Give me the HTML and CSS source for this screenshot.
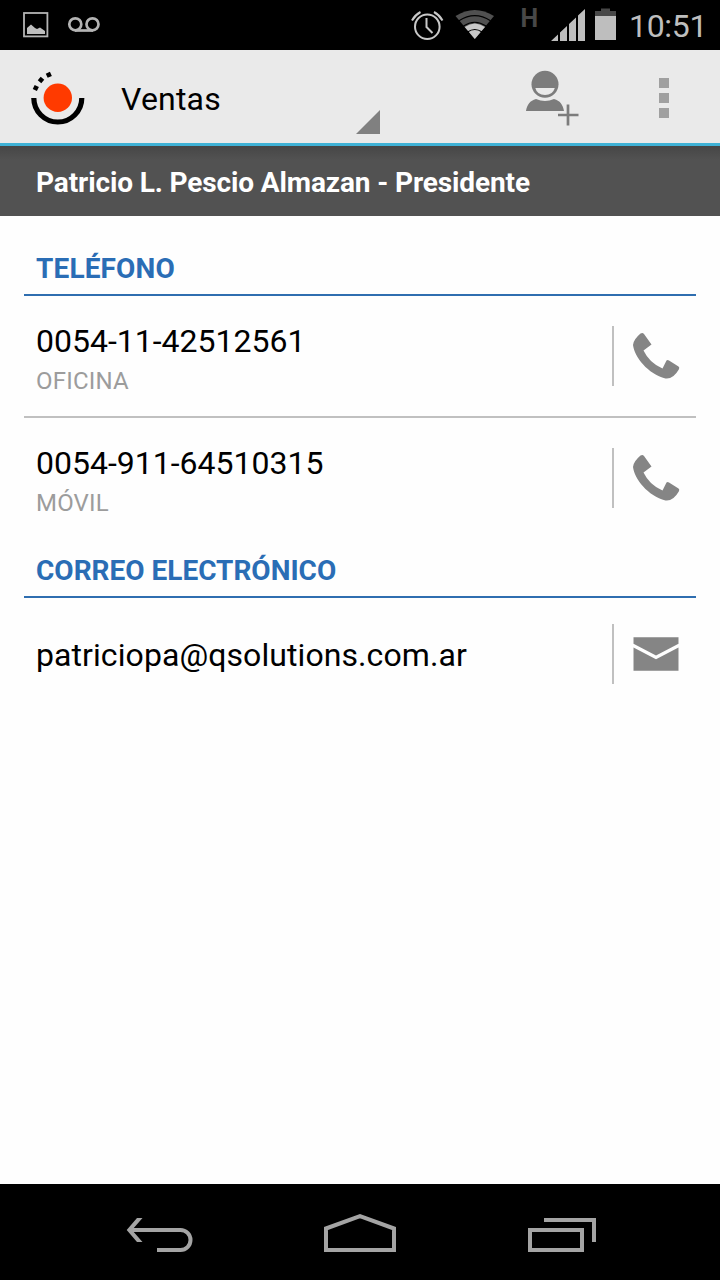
FILE: index.html
```html
<!DOCTYPE html>
<html lang="es">
<head>
  <meta charset="UTF-8">
  <meta name="viewport" content="width=device-width, initial-scale=1.0">
  <title>Ventas</title>
  <link rel="stylesheet" href="styles.css">
</head>
<body>

<!-- Status bar -->
<div class="status-bar">
  <svg class="status-left" width="110" height="50" viewBox="0 0 110 50">
    <rect x="24" y="13" width="23.4" height="23.4" fill="none" stroke="#b4b4b4" stroke-width="1.8"/>
    <path d="M27 34V28l4-3.5 4 3.5 2 1 3-1.5 5 3.500V34z" fill="#bebebe"/>
    <g fill="none" stroke="#b4b4b4" stroke-width="2.700">
      <circle cx="75.300" cy="24.300" r="6"/>
      <circle cx="92.500" cy="24.300" r="6"/>
      <path d="M75 30.500h18"/>
    </g>
  </svg>
  <svg class="status-right" width="220" height="50" viewBox="400 0 220 50">
    <!-- alarm -->
    <g fill="none" stroke="#c8c8c8" stroke-width="2">
      <circle cx="427.300" cy="26.700" r="12.300"/>
      <path d="M426.500 18v9l6 6"/>
      <path d="M412 20.500q3-5.500 8.500-8.500M434 12q5.500 3 8.500 8.500"/>
    </g>
    <!-- wifi -->
    <path d="M474.800 39L455.500 16Q474.800 4 494 16z" fill="#505050"/>
    <path d="M474.800 39L464.700 27Q474.800 20 485 27z" fill="#c8c8c8"/>
    <g fill="none" stroke="#000" stroke-width="1.200">
      <path d="M459 20.800Q474.800 10.500 490.500 20.800"/>
      <path d="M463.500 26Q474.800 18.500 486 26"/>
      <path d="M467.500 32Q474.800 27 482 32"/>
    </g>
    <text class="network" x="520.500" y="27">H</text>
    <!-- signal -->
    <path d="M551 41l7-6.500V41zM560 41v-8.500l7-6.500v15zM569 41V24l7-6.500V41zM578 41V15.500l7-6.500v32z" fill="#bebebe"/>
    <!-- battery -->
    <path d="M595 16.500V11h6V8.500h9V11h6v5.500z" fill="#484848"/>
    <rect x="595" y="16" width="21" height="24" fill="#bebebe"/>
  </svg>
  <span class="clock">10:51</span>
</div>

<!-- Action bar -->
<header class="action-bar">
  <svg class="logo" width="56" height="56" viewBox="30 70 56 56">
    <path d="M33.800 98a24 24 0 0 0 48 0" fill="none" stroke="#000" stroke-width="5.200"/>
    <circle cx="57.800" cy="97.700" r="14.200" fill="#ff3a00"/>
    <g fill="#000">
      <rect x="-2.300" y="-2.300" width="4.600" height="4.600" transform="translate(35.800 88) rotate(25)"/>
      <rect x="-2.300" y="-2.300" width="4.600" height="4.600" transform="translate(41 80) rotate(40)"/>
      <rect x="-2.300" y="-2.300" width="4.600" height="4.600" transform="translate(48.800 74.800) rotate(65)"/>
    </g>
  </svg>
  <div class="spinner">
    <span class="spinner-text">Ventas</span>
    <svg class="spinner-arrow" width="24" height="24" viewBox="0 0 24 24"><path d="M24 0v24H0z" fill="#808080"/></svg>
  </div>
  <svg class="add-contact" width="54" height="58" viewBox="525 69 54 58">
    <circle cx="545" cy="84.300" r="13.500" fill="#7c7c7c"/>
    <path d="M535.300 88h19.500q-2 7-9.800 7t-9.700-7z" fill="#eaeaea"/>
    <path d="M526 111c1-6 4-10.500 10-12q9 4 18 0c6 1.500 9 6 10 12z" fill="#7c7c7c"/>
    <path d="M558 115h20.500M568 104.500v21" stroke="#7c7c7c" stroke-width="2.700" fill="none"/>
  </svg>
  <svg class="overflow" width="10" height="40" viewBox="0 0 10 40">
    <path d="M0 0h10v10H0zM0 15h10v10H0zM0 30h10v10H0z" fill="#a0a0a0"/>
  </svg>
</header>

<h1 class="contact-name">Patricio L. Pescio Almazan - Presidente</h1>

<main class="content">
  <h2 class="section-title phone">TELÉFONO</h2>
  <div class="row divider">
    <div class="row-text">
      <div class="value">0054-11-42512561</div>
      <div class="label">OFICINA</div>
    </div>
    <div class="row-action">
      <svg width="48" height="48" viewBox="0 0 48 48"><path class="icon" d="M8.500 1.600Q10.500 0 12 2L19.500 12.500 11.500 18.500Q17.500 31 30.500 36.500L34.500 28.500Q35.500 27.500 37 28.500L46.500 34.500Q48 35.500 46.800 37.500Q41 47.500 33.500 46.500C16 42 2.500 25 1 13Q1.500 7.500 8.500 1.600z"/></svg>
    </div>
  </div>
  <div class="row">
    <div class="row-text">
      <div class="value">0054-911-64510315</div>
      <div class="label">MÓVIL</div>
    </div>
    <div class="row-action">
      <svg width="48" height="48" viewBox="0 0 48 48"><path class="icon" d="M8.500 1.600Q10.500 0 12 2L19.500 12.500 11.500 18.500Q17.500 31 30.500 36.500L34.500 28.500Q35.500 27.500 37 28.500L46.500 34.500Q48 35.500 46.800 37.500Q41 47.500 33.500 46.500C16 42 2.500 25 1 13Q1.500 7.500 8.500 1.600z"/></svg>
    </div>
  </div>
  <h2 class="section-title mail">CORREO ELECTRÓNICO</h2>
  <div class="row row-single">
    <div class="row-text">
      <div class="value email">patriciopa@qsolutions.com.ar</div>
    </div>
    <div class="row-action">
      <svg width="48" height="48" viewBox="0 0 48 48"><path class="icon" d="M1.500 7.300h45v6.500L24 25.500 1.500 13.800zM1.500 17.500L24 29.300l22.500-11.800v23.200h-45z"/></svg>
    </div>
  </div>
</main>

<!-- Navigation bar -->
<nav class="nav-bar">
  <svg width="68" height="40" viewBox="126 1214 68 40">
    <path d="M131 1230h49.500a10 10 0 0 1 0 20h-23.500"/>
    <path class="arrow-head" d="M137 1218h5.500l-10.500 12 10.500 12H137l-10.300-12z"/>
  </svg>
  <svg width="76" height="40" viewBox="322 1214 76 40">
    <path d="M326 1228.500l34-12.300 34 12.300V1250h-68z"/>
  </svg>
  <svg width="72" height="40" viewBox="526 1214 72 40">
    <path d="M530 1230h52v20h-52zM544 1220h50v22"/>
  </svg>
</nav>

</body>
</html>
```

FILE: styles.css
```css
* {
  box-sizing: border-box;
}
body {
  display: flex;
  flex-direction: column;
  width: 720px;
  height: 1280px;
  margin: 0;
  overflow: hidden;
  font-family: Roboto, sans-serif;
  background: #fefefe;
  color: #000;
}
svg {
  display: block;
  flex: none;
}
.status-bar {
  display: flex;
  height: 50px;
  background: #000;
}
.status-right {
  margin-left: auto;
}
.network {
  fill: #484848;
  font-size: 25px;
  font-weight: bold;
}
.clock {
  width: 100px;
  padding: 7px 0 0 9px;
  font-size: 32px;
  line-height: 38px;
  letter-spacing: -0.3px;
  color: #bebebe;
}
.action-bar {
  display: flex;
  align-items: flex-start;
  height: 96px;
  background: #eaeaea;
  border-bottom: 3px solid #3fb2d6;
}
.logo {
  margin: 20px 0 0 30px;
}
.spinner {
  display: flex;
  justify-content: space-between;
  width: 259px;
  margin-left: 35px;
}
.spinner-text {
  padding-top: 30px;
  font-size: 32px;
  line-height: 38px;
  letter-spacing: 0.2px;
}
.spinner-arrow {
  margin-top: 60px;
}
.add-contact {
  margin: 19px 0 0 145px;
}
.overflow {
  margin: 28px 0 0 80px;
}
.contact-name {
  height: 70px;
  margin: 0;
  padding: 20px 36px 0;
  background: linear-gradient(#464646, #525252 14px);
  color: #fff;
  font-size: 28px;
  font-weight: bold;
  line-height: 33px;
  letter-spacing: -0.12px;
}
.content {
  flex: 1;
  padding: 24px 24px 0;
}
.section-title {
  height: 56px;
  margin: 0;
  padding: 12px 12px 0;
  border-bottom: 2px solid #2f6eb0;
  color: #2a6db5;
  font-size: 28px;
  font-weight: bold;
  line-height: 33px;
}
.section-title.phone {
  letter-spacing: 0.15px;
}
.section-title.mail {
  height: 60px;
  padding-top: 16px;
}
.row {
  display: flex;
  align-items: center;
  height: 120px;
}
.row.divider {
  height: 122px;
  border-bottom: 2px solid #c0c0c0;
}
.row-single {
  height: 112px;
}
.row-text {
  flex: 1;
  padding: 5px 0 0 12px;
}
.row-single .row-text {
  padding-top: 2px;
}
.value {
  font-size: 32px;
  line-height: 38px;
}
.label {
  margin-top: 7px;
  color: #9c9c9c;
  font-size: 24px;
  line-height: 28px;
  letter-spacing: 0.2px;
}
.email {
  letter-spacing: 0.08px;
}
.row-action {
  display: flex;
  align-items: center;
  width: 84px;
  height: 60px;
  padding-left: 18px;
  border-left: 2px solid #c0c0c0;
}
.icon {
  fill: #858585;
}
.nav-bar {
  display: flex;
  justify-content: space-between;
  height: 96px;
  padding: 30px 122px 0 126px;
  background: #000;
}
.nav-bar path {
  fill: none;
  stroke: #a4a4a4;
  stroke-width: 4;
}
.nav-bar .arrow-head {
  fill: #a4a4a4;
  stroke: none;
}
```
